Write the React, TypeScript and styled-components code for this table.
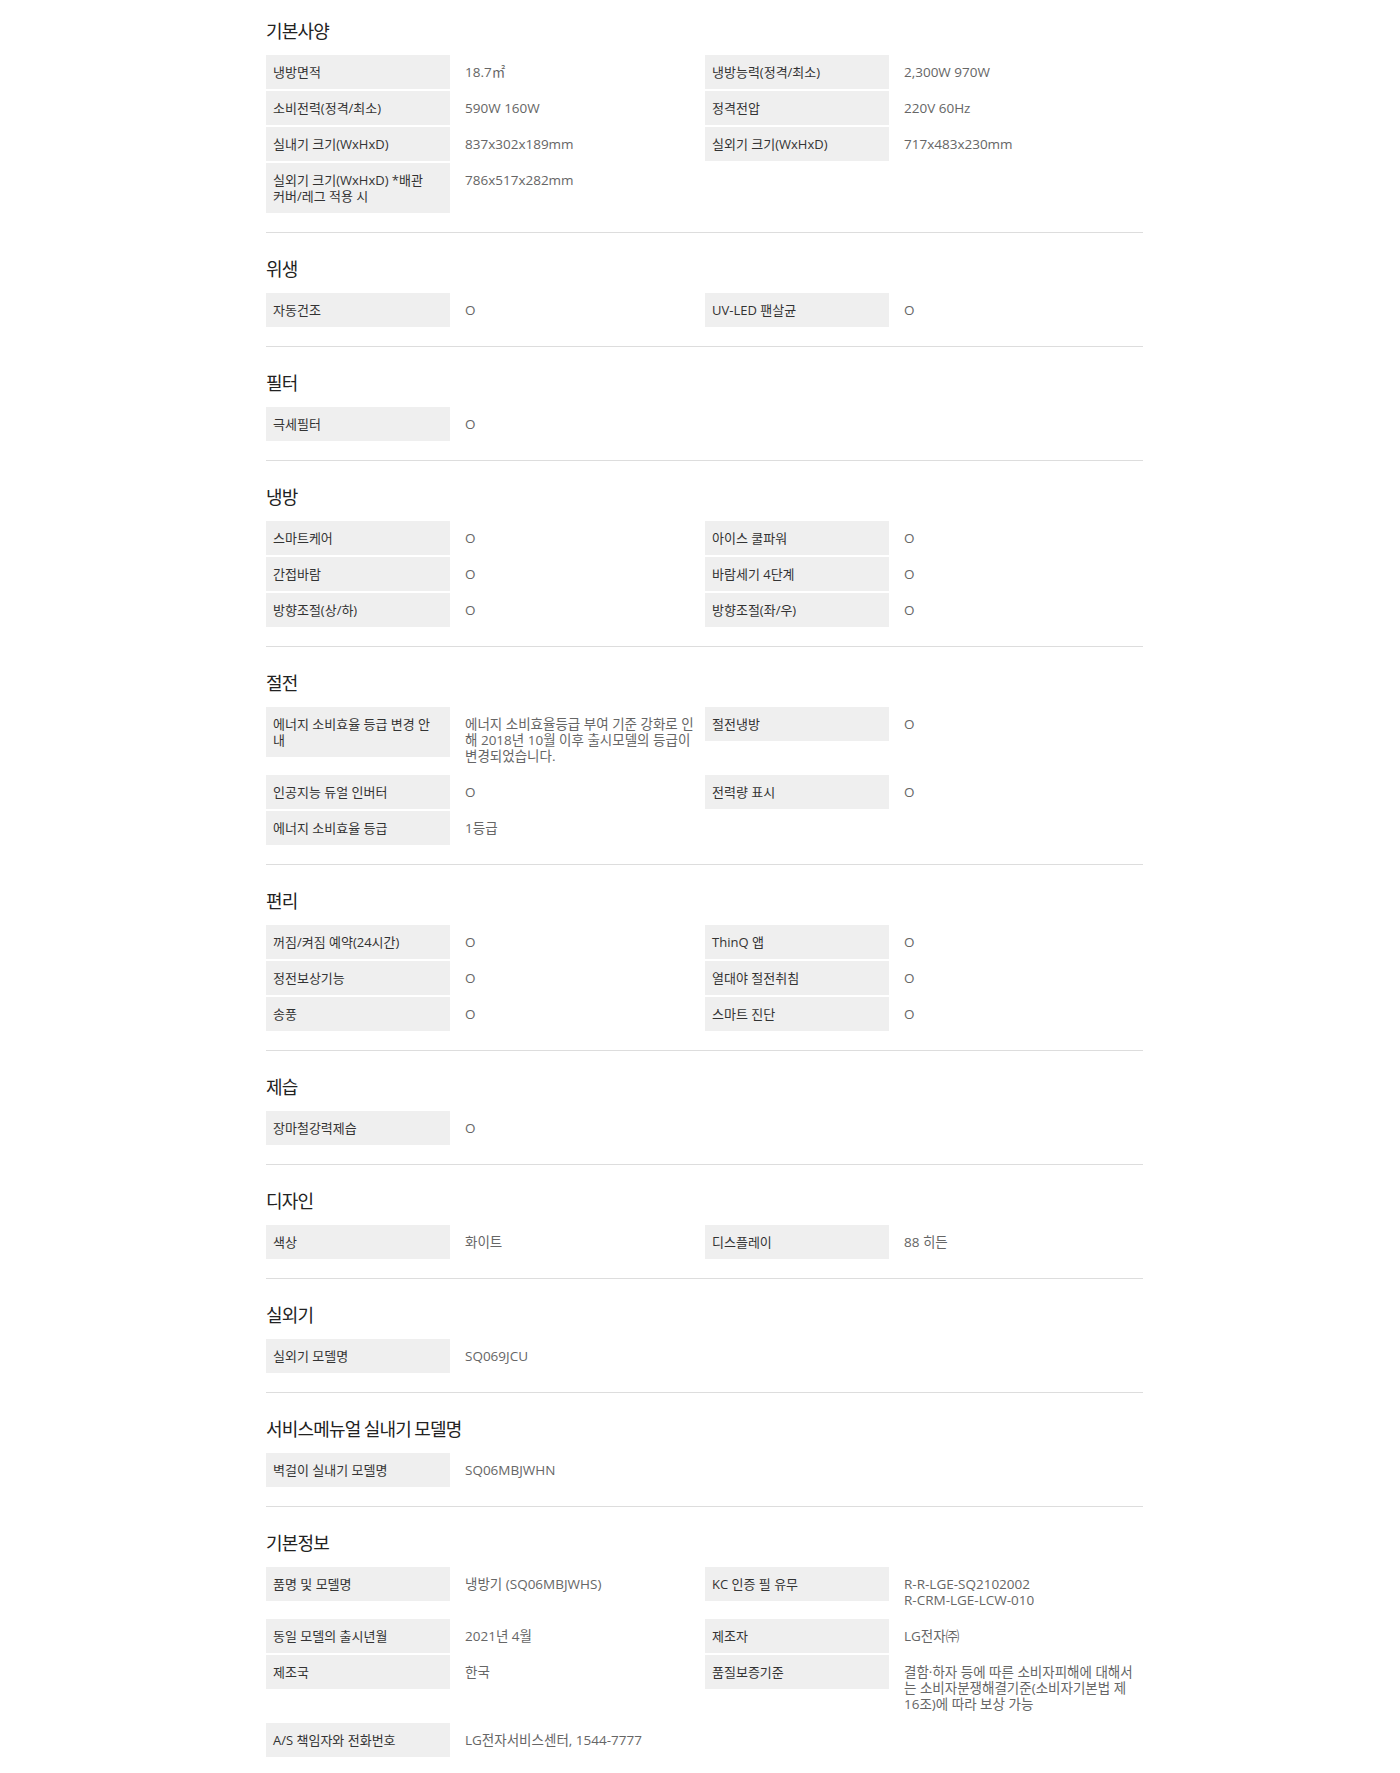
import React from "react";
import styled, { createGlobalStyle } from "styled-components";

const GlobalStyle = createGlobalStyle`
  html, body {
    margin: 0;
    padding: 0;
    background: #ffffff;
  }
  body {
    font-family: "Open Sans", "Noto Sans CJK KR", sans-serif;
    color: #333333;
  }
  * { box-sizing: border-box; }
`;

const Page = styled.main`
  width: 877px;
  margin: 0 0 0 266px;
`;

const Section = styled.section`
  padding: 23px 0 19px;
  border-bottom: 1px solid #dddddd;
  &:first-child {
    padding-top: 18px;
  }
`;

const Title = styled.h3`
  margin: 0 0 13px;
  font-family: "Noto Sans CJK KR", sans-serif;
  font-size: 18px;
  font-weight: 400;
  line-height: 24px;
  letter-spacing: -0.8px;
  color: #222222;
`;

const Grid = styled.div`
  display: grid;
  grid-template-columns: 439px 438px;
  row-gap: 2px;
  align-items: start;
`;

const Item = styled.div`
  display: flex;
  align-items: flex-start;
`;

const Label = styled.div`
  flex: 0 0 184px;
  padding: 9px 17px 9px 7px;
  background: #efefef;
  font-size: 13px;
  line-height: 16px;
  color: #333333;
`;

const Value = styled.div`
  flex: 1 1 auto;
  min-width: 0;
  padding: 9px 8px 9px 15px;
  font-size: 13.5px;
  line-height: 16px;
  color: #666666;
`;

type Spec = { label: string; value: React.ReactNode };
type Group = { title: string; items: Spec[] };

const groups: Group[] = [
  {
    title: "기본사양",
    items: [
      { label: "냉방면적", value: "18.7㎡" },
      { label: "냉방능력(정격/최소)", value: "2,300W 970W" },
      { label: "소비전력(정격/최소)", value: "590W 160W" },
      { label: "정격전압", value: "220V 60Hz" },
      { label: "실내기 크기(WxHxD)", value: "837x302x189mm" },
      { label: "실외기 크기(WxHxD)", value: "717x483x230mm" },
      { label: "실외기 크기(WxHxD) *배관 커버/레그 적용 시", value: "786x517x282mm" },
    ],
  },
  {
    title: "위생",
    items: [
      { label: "자동건조", value: "O" },
      { label: "UV-LED 팬살균", value: "O" },
    ],
  },
  {
    title: "필터",
    items: [{ label: "극세필터", value: "O" }],
  },
  {
    title: "냉방",
    items: [
      { label: "스마트케어", value: "O" },
      { label: "아이스 쿨파워", value: "O" },
      { label: "간접바람", value: "O" },
      { label: "바람세기 4단계", value: "O" },
      { label: "방향조절(상/하)", value: "O" },
      { label: "방향조절(좌/우)", value: "O" },
    ],
  },
  {
    title: "절전",
    items: [
      {
        label: "에너지 소비효율 등급 변경 안내",
        value:
          "에너지 소비효율등급 부여 기준 강화로 인해 2018년 10월 이후 출시모델의 등급이 변경되었습니다.",
      },
      { label: "절전냉방", value: "O" },
      { label: "인공지능 듀얼 인버터", value: "O" },
      { label: "전력량 표시", value: "O" },
      { label: "에너지 소비효율 등급", value: "1등급" },
    ],
  },
  {
    title: "편리",
    items: [
      { label: "꺼짐/켜짐 예약(24시간)", value: "O" },
      { label: "ThinQ 앱", value: "O" },
      { label: "정전보상기능", value: "O" },
      { label: "열대야 절전취침", value: "O" },
      { label: "송풍", value: "O" },
      { label: "스마트 진단", value: "O" },
    ],
  },
  {
    title: "제습",
    items: [{ label: "장마철강력제습", value: "O" }],
  },
  {
    title: "디자인",
    items: [
      { label: "색상", value: "화이트" },
      { label: "디스플레이", value: "88 히든" },
    ],
  },
  {
    title: "실외기",
    items: [{ label: "실외기 모델명", value: "SQ069JCU" }],
  },
  {
    title: "서비스메뉴얼 실내기 모델명",
    items: [{ label: "벽걸이 실내기 모델명", value: "SQ06MBJWHN" }],
  },
  {
    title: "기본정보",
    items: [
      { label: "품명 및 모델명", value: "냉방기 (SQ06MBJWHS)" },
      {
        label: "KC 인증 필 유무",
        value: (
          <>
            R-R-LGE-SQ2102002
            <br />
            R-CRM-LGE-LCW-010
          </>
        ),
      },
      { label: "동일 모델의 출시년월", value: "2021년 4월" },
      { label: "제조자", value: "LG전자㈜" },
      { label: "제조국", value: "한국" },
      {
        label: "품질보증기준",
        value:
          "결함·하자 등에 따른 소비자피해에 대해서는 소비자분쟁해결기준(소비자기본법 제16조)에 따라 보상 가능",
      },
      { label: "A/S 책임자와 전화번호", value: "LG전자서비스센터, 1544-7777" },
    ],
  },
];

export default function App() {
  return (
    <>
      <GlobalStyle />
      <Page>
        {groups.map((g) => (
          <Section key={g.title}>
            <Title>{g.title}</Title>
            <Grid>
              {g.items.map((it, i) => (
                <Item key={i}>
                  <Label>{it.label}</Label>
                  <Value>{it.value}</Value>
                </Item>
              ))}
            </Grid>
          </Section>
        ))}
      </Page>
    </>
  );
}
